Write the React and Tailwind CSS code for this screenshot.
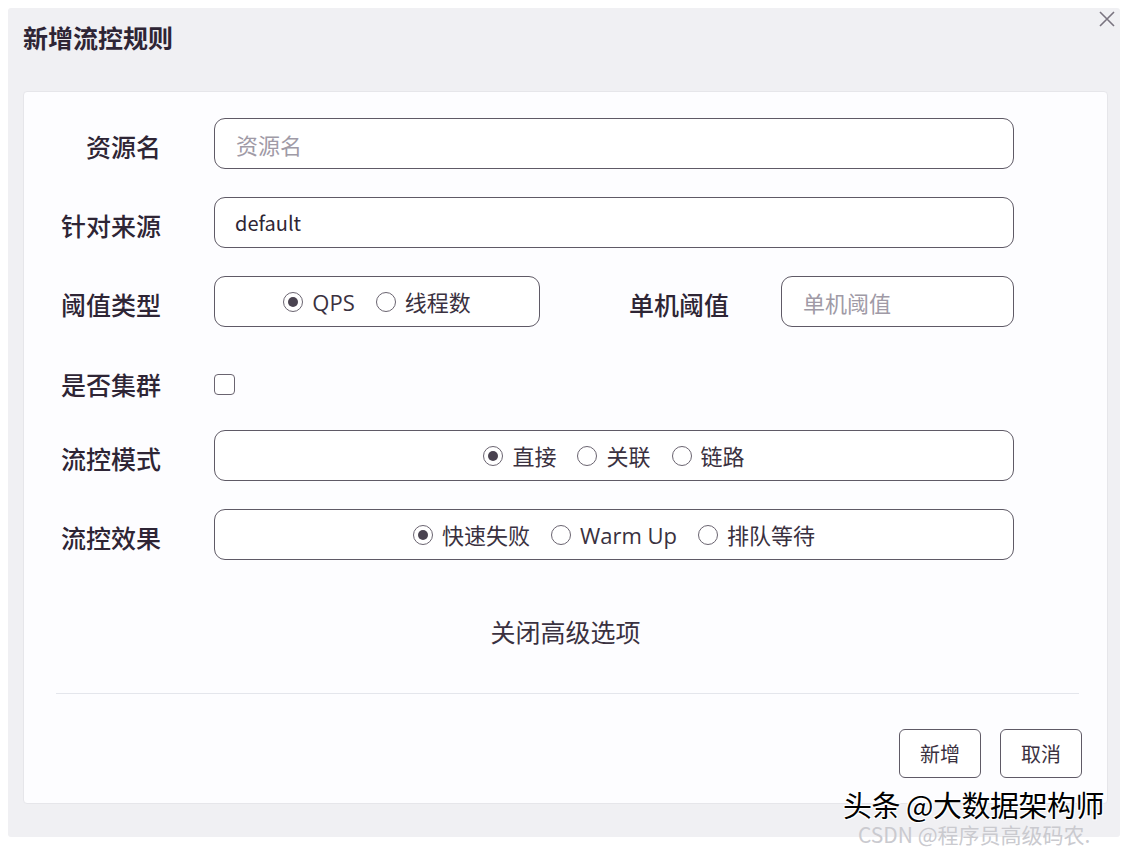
import React from 'react'

// ─── Small building blocks ────────────────────────────────────────────────────

const FONT = { fontFamily: '"Noto Sans CJK SC", "Noto Sans", sans-serif' }

function Radio({ label, checked }) {
  return (
    <span className="flex items-center gap-[9px]">
      <span className="w-[20px] h-[20px] rounded-full border-[1.5px] border-[#6a6470] bg-white flex items-center justify-center shrink-0">
        {checked && <span className="w-[10px] h-[10px] rounded-full bg-[#4a4350]" />}
      </span>
      <span className="text-[22px] text-[#3a3140] leading-none" style={{ fontFamily: '"Open Sans", "Noto Sans CJK SC", sans-serif' }}>
        {label}
      </span>
    </span>
  )
}

function Label({ children, className = 'pt-[6px]' }) {
  return (
    <div className={`w-[137px] shrink-0 text-right text-[25px] font-medium text-[#2e2535] leading-none ${className}`}>
      {children}
    </div>
  )
}

function Box({ className = '', children }) {
  return (
    <div className={`h-[51px] rounded-[11px] border-[1.5px] border-[#5f5a66] bg-white ${className}`}>
      {children}
    </div>
  )
}

// ─── Dialog ───────────────────────────────────────────────────────────────────

export default function App() {
  return (
    <div style={FONT} className="relative w-[1132px] h-[848px] bg-white pt-[8px] pl-[8px] pr-[12px] pb-[11px]">
      <div className="relative h-full bg-[#f0f0f3] rounded-[3px] pl-[15px] pr-[12px]">
        {/* Header */}
        <div className="h-[83px] flex items-start pt-[14px]">
          <h1 className="text-[25px] font-bold text-[#2e2535] leading-[30px]">新增流控规则</h1>
        </div>
        <button className="absolute right-[4px] top-[2px] w-[18px] h-[18px] text-[#7a7480]">
          <svg viewBox="0 0 18 18" className="w-full h-full" fill="none" stroke="currentColor" strokeWidth="1.6">
            <path d="M2 2 L16 16 M16 2 L2 16" />
          </svg>
        </button>

        {/* Body card */}
        <div className="bg-[#fdfdff] border border-[#e6e6ea] rounded-[4px] pt-[26px] pb-[25px]">
          <div className="flex items-center h-[51px]">
            <Label>资源名</Label>
            <Box className="ml-[53px] w-[800px] flex items-center px-[21px]">
              <span className="text-[22px] text-[#a09aa6] leading-none">资源名</span>
            </Box>
          </div>

          <div className="flex items-center h-[51px] mt-[28px]">
            <Label>针对来源</Label>
            <Box className="ml-[53px] w-[800px] flex items-center px-[20px]">
              <span className="text-[20px] text-[#2e2535] leading-none">default</span>
            </Box>
          </div>

          <div className="flex items-center h-[51px] mt-[28px]">
            <Label>阈值类型</Label>
            <Box className="ml-[53px] w-[326px] flex items-center justify-center gap-[21px]">
              <Radio label="QPS" checked />
              <Radio label="线程数" />
            </Box>
            <div className="w-[189px] shrink-0 text-right pt-[6px] text-[25px] font-medium text-[#2e2535] leading-none">
              单机阈值
            </div>
            <Box className="ml-[52px] w-[233px] flex items-center px-[21px]">
              <span className="text-[22px] text-[#a09aa6] leading-none">单机阈值</span>
            </Box>
          </div>

          <div className="flex items-center h-[58px] mt-[28px]">
            <Label className="pt-0">是否集群</Label>
            <span className="ml-[53px] w-[21px] h-[21px] rounded-[4px] border-[1.5px] border-[#6a6470] bg-white" />
          </div>

          <div className="flex items-center h-[51px] mt-[17px]">
            <Label>流控模式</Label>
            <Box className="ml-[53px] w-[800px] flex items-center justify-center gap-[21px]">
              <Radio label="直接" checked />
              <Radio label="关联" />
              <Radio label="链路" />
            </Box>
          </div>

          <div className="flex items-center h-[51px] mt-[28px]">
            <Label>流控效果</Label>
            <Box className="ml-[53px] w-[800px] flex items-center justify-center gap-[21px]">
              <Radio label="快速失败" checked />
              <Radio label="Warm Up" />
              <Radio label="排队等待" />
            </Box>
          </div>

          <div className="mt-[54px] text-center text-[25px] text-[#3a3140] leading-[34px]">关闭高级选项</div>

          <div className="mt-[45px] ml-[32px] mr-[28px] h-px bg-[#e4e6ec]" />

          <div className="mt-[35px] flex justify-end gap-[19px] pr-[25px]">
            <button className="w-[82px] h-[49px] rounded-[6px] border-[1.5px] border-[#5f5a66] bg-white text-[20px] text-[#3a3140]">新增</button>
            <button className="w-[82px] h-[49px] rounded-[6px] border-[1.5px] border-[#5f5a66] bg-white text-[20px] text-[#3a3140]">取消</button>
          </div>
        </div>
      </div>

      {/* Watermarks */}
      <div
        className="absolute left-[843px] top-[790px] text-[29px] text-black leading-none tracking-[-0.5px]"
        style={{ textShadow: '1px 1px 0 #fff, -1px -1px 0 #fff, 1px -1px 0 #fff, -1px 1px 0 #fff' }}
      >
        头条 @大数据架构师
      </div>
      <div className="absolute left-[858px] top-[824px] text-[21px] text-[#cacacf] leading-none">CSDN @程序员高级码农.</div>
    </div>
  )
}
